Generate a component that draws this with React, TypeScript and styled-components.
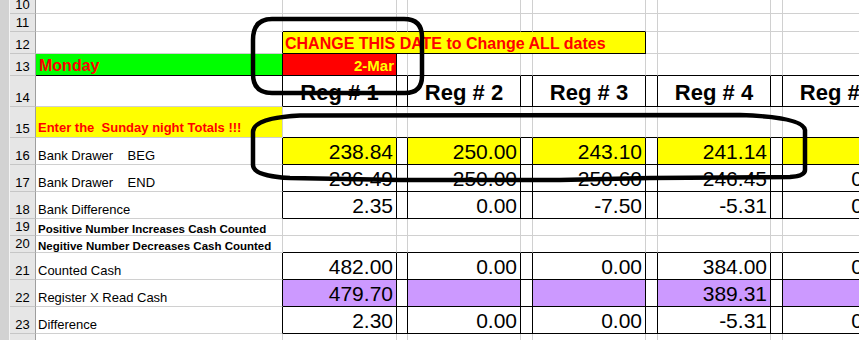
import React from "react";
import styled, { createGlobalStyle } from "styled-components";

const GRID = "#d0d0d0";
const INK = "#000000";
const YELLOW = "#ffff00";
const PURPLE = "#cc99ff";
const RED = "#ff0000";
const GREEN = "#00ff00";

const GlobalStyle = createGlobalStyle`
  html, body {
    margin: 0;
    padding: 0;
    background: #ffffff;
    overflow: hidden;
  }
  body {
    font-family: "Liberation Sans", Arial, sans-serif;
    color: #000;
  }
`;

const Page = styled.div`
  position: relative;
  display: flex;
  width: 859px;
  height: 340px;
  overflow: hidden;
`;

const Strip = styled.div`
  flex: none;
  width: 9px;
  background: #d2d2d2;
  border-right: 1px solid #f4f4f4;
`;

const Sheet = styled.div<{ $rows: number[] }>`
  flex: none;
  display: grid;
  grid-template-columns: 26px 247px 114px 11px 113px 12px 113px 12px 113px 12px 113px;
  grid-template-rows: ${(p) => p.$rows.map((h) => `${h}px`).join(" ")};
  align-content: start;
`;

const RowHead = styled.div`
  box-sizing: border-box;
  display: flex;
  align-items: flex-end;
  justify-content: center;
  overflow: hidden;
  padding-bottom: 1px;
  background: #e6e6e6;
  border-right: 1px solid #9e9e9e;
  border-bottom: 1px solid #c6c6c6;
  font-size: 13px;
  color: #000;
`;

const Cell = styled.div<{
  $bg?: string;
  $rb?: boolean;
  $bb?: boolean;
  $span?: number;
  $justify?: string;
}>`
  box-sizing: border-box;
  min-width: 0;
  display: flex;
  align-items: flex-end;
  justify-content: ${(p) => p.$justify ?? "flex-start"};
  overflow: hidden;
  white-space: pre;
  background: ${(p) => p.$bg ?? "#ffffff"};
  border-right: 1px solid ${(p) => (p.$rb ? INK : GRID)};
  border-bottom: 1px solid ${(p) => (p.$bb ? INK : GRID)};
  grid-column: ${(p) => (p.$span ? `span ${p.$span}` : "auto")};
`;

const Label = styled.span`
  font-size: 13px;
  padding: 0 0 1px 2px;
`;

const Alert = styled.span`
  font-size: 13px;
  font-weight: bold;
  color: ${RED};
  padding: 0 0 2px 2px;
`;

const Note = styled.span`
  font-size: 11.5px;
  font-weight: bold;
  padding: 0 0 0 2px;
`;

const Day = styled.span`
  font-size: 16px;
  font-weight: bold;
  color: ${RED};
  padding-left: 3px;
`;

const Banner = styled.span`
  font-size: 16px;
  font-weight: bold;
  color: ${RED};
  padding-left: 2px;
`;

const DateText = styled.span`
  font-size: 15px;
  font-weight: bold;
  color: ${YELLOW};
  padding: 0 2px 1px 0;
`;

const Num = styled.span`
  font-size: 21px;
  padding-right: 3px;
`;

const Head = styled.span`
  font-size: 22px;
  font-weight: bold;
`;

const Marks = styled.svg`
  position: absolute;
  left: 0;
  top: 0;
  pointer-events: none;
`;

type SheetRow = {
  n: number;
  h: number;
  label?: React.ReactNode;
  labelBg?: string;
  vals?: string[];
  fill?: string;
  boxed?: boolean;
  closeBelow?: boolean;
  head?: boolean;
};

const rows: SheetRow[] = [
  { n: 14, h: 31, boxed: true, head: true, vals: ["Reg # 1", "Reg # 2", "Reg # 3", "Reg # 4", "Reg # 5"] },
  { n: 15, h: 31, label: <Alert>Enter the  Sunday night Totals !!!</Alert>, labelBg: YELLOW, closeBelow: true },
  { n: 16, h: 27, label: <Label>Bank Drawer    BEG</Label>, boxed: true, fill: YELLOW, vals: ["238.84", "250.00", "243.10", "241.14", ""] },
  { n: 17, h: 27, label: <Label>Bank Drawer    END</Label>, boxed: true, vals: ["236.49", "250.00", "250.60", "246.45", "0.00"] },
  { n: 18, h: 27, label: <Label>Bank Difference</Label>, boxed: true, vals: ["2.35", "0.00", "-7.50", "-5.31", "0.00"] },
  { n: 19, h: 17, label: <Note>Positive Number Increases Cash Counted</Note> },
  { n: 20, h: 17, label: <Note>Negitive Number Decreases Cash Counted</Note>, closeBelow: true },
  { n: 21, h: 27, label: <Label>Counted Cash</Label>, boxed: true, vals: ["482.00", "0.00", "0.00", "384.00", "0.00"] },
  { n: 22, h: 27, label: <Label>Register X Read Cash</Label>, boxed: true, fill: PURPLE, vals: ["479.70", "", "", "389.31", ""] },
  { n: 23, h: 27, label: <Label>Difference</Label>, boxed: true, vals: ["2.30", "0.00", "0.00", "-5.31", "0.00"] },
  { n: 24, h: 27 },
];

const topHeights = [14, 18, 22, 22];
const COLS = 9; // B..J

const renderRow = (r: SheetRow) => {
  const cells: React.ReactNode[] = [
    <RowHead key="h">{r.n}</RowHead>,
    <Cell key="a" $bg={r.labelBg} $rb={r.boxed}>
      {r.label}
    </Cell>,
  ];
  for (let i = 0; i < COLS; i++) {
    const main = i % 2 === 0;
    const v = main && r.vals ? r.vals[i / 2] : "";
    cells.push(
      <Cell
        key={i}
        $bg={main ? r.fill : undefined}
        $rb={r.boxed}
        $bb={r.boxed || r.closeBelow}
        $justify={r.head ? "center" : "flex-end"}
      >
        {v && (r.head ? <Head>{v}</Head> : <Num>{v}</Num>)}
      </Cell>
    );
  }
  return <React.Fragment key={r.n}>{cells}</React.Fragment>;
};

const blanks = (count: number, black = false) =>
  Array.from({ length: count }, (_, i) => <Cell key={`b${i}`} $bb={black} />);

export default function App() {
  return (
    <>
      <GlobalStyle />
      <Page>
        <Strip />
        <Sheet $rows={[...topHeights, ...rows.map((r) => r.h)]}>
          <RowHead>10</RowHead>
          <Cell />
          {blanks(COLS)}

          <RowHead>11</RowHead>
          <Cell />
          {blanks(5, true)}
          {blanks(4).map((c, i) => React.cloneElement(c as React.ReactElement, { key: `g${i}` }))}

          <RowHead>12</RowHead>
          <Cell $rb />
          <Cell $span={5} $bg={YELLOW} $rb $bb>
            <Banner>CHANGE THIS DATE to Change ALL dates</Banner>
          </Cell>
          {blanks(4)}

          <RowHead>13</RowHead>
          <Cell $bg={GREEN} $rb $bb>
            <Day>Monday</Day>
          </Cell>
          <Cell $bg={RED} $rb $bb $justify="flex-end">
            <DateText>2-Mar</DateText>
          </Cell>
          {blanks(8, true)}

          {rows.map(renderRow)}
        </Sheet>

        <Marks width="859" height="340" viewBox="0 0 859 340">
          <path
            d="M 272 19 L 404 19 Q 422 19 422 37 L 422 76 Q 422 93 405 93 L 272 93 Q 253 93 253 74 L 253 40 Q 253 19 272 19 Z"
            fill="none"
            stroke="#000"
            strokeWidth="4.5"
          />
          <path
            d="M 300 115.5 L 740 115 Q 803 117 805 130 L 805 170 Q 805 176 790 177 L 650 178 L 560 180 L 400 180 L 290 178 Q 253 176 253 165 L 253 132 Q 253 118 300 115.5 Z"
            fill="none"
            stroke="#000"
            strokeWidth="4.5"
            strokeLinejoin="round"
          />
        </Marks>
      </Page>
    </>
  );
}
